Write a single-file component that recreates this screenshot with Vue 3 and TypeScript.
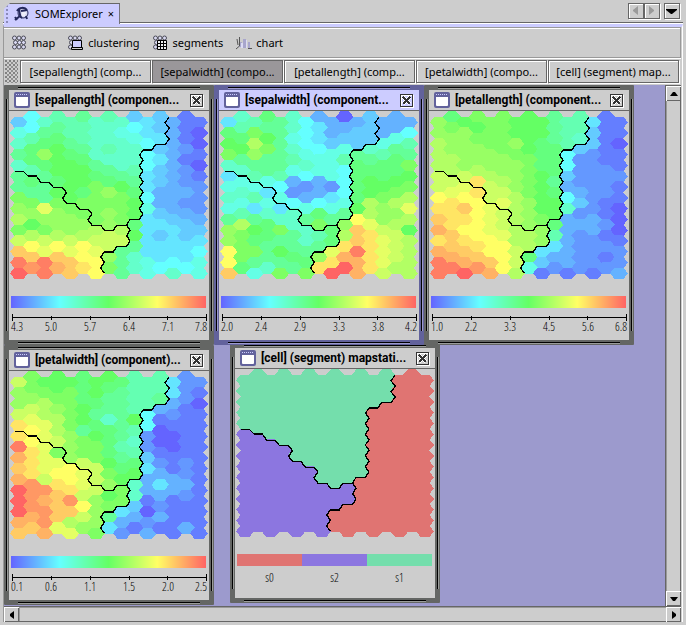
<script setup lang="ts">
interface MapWindow {
  id: string
  title: string
  active?: boolean
  rows?: string[]
  ticks?: string[]
}

interface Cell {
  points: string
  fill: string
}

// Each letter is one cell value on a 25 step scale, a = lowest, y = highest.
const windows: MapWindow[] = [
  {
    id: 'cell',
    title: '[cell] (segment) mapstati...',
  },
  {
    id: 'petal-width',
    title: '[petalwidth] (component)...',
    ticks: ['0.1', '0.6', '1.1', '1.5', '2.0', '2.5'],
    rows: [
      'qnmmmlmmljjjfcc',
      'onnmnlmlkjjjfcb',
      'oopnnllkkjjkdca',
      'qqponmkkkjgdcbb',
      'trrpnmlikmgbbbb',
      'tsrpokmlkjcaabb',
      'xsrqonnljicaabb',
      'vtrnonnlkjebbbb',
      'utrrsqqmllfcbcb',
      'vtqssrqnmmdddcb',
      'ywwttrqonidfddb',
      'ywvuwqomnibdbcb',
      'ywwuusonfeacbbb',
      'vvwupqokddcdbbb',
      'uuvrronfcbdbbdb',
    ],
  },
  {
    id: 'sepal-length',
    title: '[sepallength] (componen...',
    ticks: ['4.3', '5.0', '5.7', '6.4', '7.1', '7.8'],
    rows: [
      'egijjkijiefedbb',
      'hgkkjjiihgfedba',
      'ijllkjiiihgfdba',
      'klomlkijiigedcb',
      'illmmlkiiigfdba',
      'kjkmmmlkkjfedcb',
      'klklmmnlmkfedcc',
      'nkkmmlnonlgdddc',
      'onrnnnnnnmhddcc',
      'poooonnonmfeedd',
      'nmnooopoplfffee',
      'qpqpqpqqqmfefef',
      'usrsrsrqkkffffg',
      'xuxuussokihfgfh',
      'ywxvutsnkihgigh',
    ],
  },
  {
    id: 'sepal-width',
    title: '[sepalwidth] (component...',
    active: true,
    ticks: ['2.0', '2.4', '2.9', '3.3', '3.8', '4.2'],
    rows: [
      'fijlkigddadeddd',
      'ljnkkigfddeeddg',
      'mlpmkhgfeeeehhj',
      'nmonkihghhkijkk',
      'ikkkkjihhjlklln',
      'fijkjhghhgllllm',
      'hhhhgdcdcglmmmn',
      'iijfhcddfglmnnp',
      'hhfhfghghhmpopr',
      'kjkiiiklkkspoop',
      'opmlniinlourqpm',
      'onllkkijlputrqp',
      'snnkmkkkrtxtrqp',
      'snkkkllotvvtrqp',
      'ulhinkntyyvtqpp',
    ],
  },
  {
    id: 'petal-length',
    title: '[petallength] (component...',
    ticks: ['1.0', '2.2', '3.3', '4.5', '5.6', '6.8'],
    rows: [
      'olmnnnmmmkjjfbb',
      'onomnnmmmkjjebb',
      'poonnnomlkjieba',
      'poooonnmllgecbb',
      'ppooooonllgccbb',
      'qpqppoonmlecccc',
      'qqrtqponmkdcccb',
      'srstqqpnmlgdccb',
      'ttusrrpommiecba',
      'uttsrqponmdcdba',
      'vtssrqpooldddca',
      'tutssrppojdccbb',
      'vuutssqpffdcccc',
      'xvvuusqleddccbc',
      'xxywvsphbcbcbcd',
    ],
  },
]

const openWindows = [
  '[sepallength] (comp...',
  '[sepalwidth] (compo...',
  '[petallength] (comp...',
  '[petalwidth] (compo...',
  '[cell] (segment) map...',
]

const segments = [
  { name: 's0', color: '#e07472' },
  { name: 's2', color: '#8c76e0' },
  { name: 's1', color: '#74deac' },
]

// Each digit is the segment that the cell belongs to.
const segmentRows: string[] = [
  '111111111111000',
  '111111111111000',
  '111111111111000',
  '111111111100000',
  '111111111100000',
  '211111111100000',
  '222111111100000',
  '222211111100000',
  '222221111100000',
  '222222111100000',
  '222222212000000',
  '222222222000000',
  '222222220000000',
  '222222200000000',
  '222222200000000',
]

const stops = [
  [100, 100, 255],
  [100, 255, 255],
  [100, 255, 100],
  [255, 255, 100],
  [255, 100, 100],
]

function scaleColor(letter: string): string {
  const v = (letter.charCodeAt(0) - 97) / 6
  const i = Math.min(3, Math.floor(v))
  const t = v - i
  const mix = stops[i].map((a, k) => Math.round(a + (stops[i + 1][k] - a) * t))
  return `rgb(${mix.join(',')})`
}

function segmentColor(digit: string): string {
  return segments.find((s) => s.name === 's' + digit)!.color
}

function hexagon(col: number, row: number): string {
  const x = 57 + (col * 540) / 14
  const y = 112 + (row * 453) / 14 - (col % 2 ? 16 : 0)
  return [
    [x - 27, y],
    [x - 13, y - 17],
    [x + 13, y - 17],
    [x + 27, y],
    [x + 13, y + 17],
    [x - 13, y + 17],
  ]
    .map((p) => p.map(Math.round).join(','))
    .join(' ')
}

function cells(win: MapWindow): Cell[] {
  const rows = win.rows ?? segmentRows
  const paint = win.rows ? scaleColor : segmentColor
  return rows.flatMap((line, row) =>
    [...line].map((ch, col) => ({ points: hexagon(col, row), fill: paint(ch) })),
  )
}

const views = windows.map((win) => ({ ...win, cells: cells(win) }))

function anchor(i: number): 'start' | 'middle' | 'end' {
  return i === 0 ? 'start' : i === 5 ? 'end' : 'middle'
}

function labelX(i: number): number {
  return i === 0 ? 1 : i === 5 ? 197 : 2 + i * 39
}
</script>

<template>
  <main class="app">
    <header class="tabbar">
      <div class="doc-tab">
        <svg class="logo" width="16" height="16" viewBox="0 0 16 16" aria-hidden="true">
          <ellipse cx="9" cy="7" rx="5" ry="5" fill="#dcdcf4" stroke="#24285c" />
          <path d="M3 5C5 1 11 1 13 4M5 3C6 7 5 10 8 12" fill="none" stroke="#24285c" stroke-width="2" />
          <path d="M1 14l5-4M1 11l2 3M7 5l6-1M12 10l1 3" fill="none" stroke="#24285c" stroke-width="2" />
          <path d="M8 7h4M8 9h3" stroke="#fff" />
        </svg>
        <span>SOMExplorer</span>
        <button class="doc-close" type="button" aria-label="Close">×</button>
      </div>
      <div class="tab-nav">
        <div class="pair">
          <button type="button" class="square" aria-label="Previous" disabled>
            <svg width="16" height="16" viewBox="0 0 16 16"><path d="M10 3v9L5 8V7z" fill="#9a9a9a" /></svg>
          </button>
          <button type="button" class="square" aria-label="Next" disabled>
            <svg width="16" height="16" viewBox="0 0 16 16"><path d="M5 3v9l5-4V7z" fill="#9a9a9a" /></svg>
          </button>
        </div>
        <button type="button" class="square" aria-label="Tab list">
          <svg width="16" height="16" viewBox="0 0 16 16"><path d="M2 6h11v1L8 11H7L2 7z" /></svg>
        </button>
      </div>
    </header>

    <section class="pane">
      <nav class="toolbar">
        <button type="button" class="tool">
          <svg width="16" height="16" viewBox="0 0 16 16" aria-hidden="true">
            <use href="#hive" />
          </svg>
          map
        </button>
        <button type="button" class="tool">
          <svg width="16" height="16" viewBox="0 0 16 16" aria-hidden="true">
            <use href="#hive" />
            <path d="M4.500 5.500h9v8h-9z" fill="#ccccff" stroke="#000" />
            <path d="M3.500 12.500h11v2h-11z" fill="#cdcdcd" stroke="#000" />
          </svg>
          clustering
        </button>
        <button type="button" class="tool">
          <svg width="16" height="16" viewBox="0 0 16 16" aria-hidden="true">
            <use href="#hive" />
            <path d="M4.500 5.500h9v9h-9z" fill="#eee" stroke="#000" />
            <path d="M7.500 5v10M10.500 5v10M4 8.500h10M4 11.500h10" stroke="#000" />
          </svg>
          segments
        </button>
        <button type="button" class="tool">
          <svg width="16" height="16" viewBox="0 0 16 16" aria-hidden="true">
            <path d="M3 7h3v5H3zM7 4h3v9H7zM12 7h2v6h-2z" fill="#a8a6cc" />
            <path d="M5 8h2v5H5zM10 5h1v8h-1z" fill="#dcdcf4" />
            <path d="M3.500 2v9L0 14M1 4l1 6M12 13.500h4" fill="none" stroke="#555" />
          </svg>
          chart
        </button>
      </nav>

      <div class="strip">
        <span class="grip"></span>
        <button
          v-for="(name, i) in openWindows"
          :key="name"
          type="button"
          class="strip-button"
          :class="{ selected: i === 1 }"
        >
          {{ name }}
        </button>
      </div>

      <div class="scroller">
        <div class="desktop">
          <article
            v-for="win in views"
            :key="win.id"
            class="window"
            :class="[win.id, { active: win.active }]"
          >
            <header class="titlebar">
              <svg width="16" height="16" viewBox="0 0 16 16" aria-hidden="true">
                <rect width="16" height="16" rx="2" fill="#62629c" />
                <path d="M2 5h12v8a1 1 0 0 1-1 1H3a1 1 0 0 1-1-1z" fill="#fff" />
                <path d="M2 2.500h12" stroke="#ccccff" stroke-dasharray="1 1" />
              </svg>
              <h2>{{ win.title }}</h2>
              <button type="button" class="close" aria-label="Close window">
                <svg width="9" height="9" viewBox="0 0 9 9" shape-rendering="crispEdges">
                  <path d="M1 1l7 7M8 1L1 8" stroke="#fff" stroke-width="3" />
                  <path d="M1 1l7 7M8 1L1 8" stroke="#333" stroke-width="2" />
                </svg>
              </button>
            </header>
            <div class="content">
              <svg class="map" viewBox="30 78 594 504" shape-rendering="crispEdges" role="img" :aria-label="win.title">
                <polygon v-for="(cell, i) in win.cells" :key="i" :points="cell.points" :fill="cell.fill" />
                <use href="#borders" />
              </svg>
              <template v-if="win.ticks">
                <div class="ramp"></div>
                <svg class="axis" viewBox="0 0 198 24">
                  <path
                    d="M2 5.500H197M2.500 2v7M41.500 4v4M80.500 4v4M119.500 4v4M157.500 4v4M196.500 2v7"
                    fill="none"
                    stroke="#000"
                    shape-rendering="crispEdges"
                  />
                  <text v-for="(t, i) in win.ticks" :key="t" :x="labelX(i)" y="19" :text-anchor="anchor(i)">{{ t }}</text>
                </svg>
              </template>
              <ul v-else class="legend">
                <li v-for="s in segments" :key="s.name">
                  <span class="swatch" :style="{ background: s.color }"></span>{{ s.name }}
                </li>
              </ul>
            </div>
          </article>
        </div>

        <div class="scroll vertical">
          <button type="button" aria-label="Scroll up">
            <svg width="14" height="14" viewBox="0 0 14 14"><path d="M6 5h2l3 4H3z" /></svg>
          </button>
          <span class="track"></span>
          <button type="button" aria-label="Scroll down">
            <svg width="14" height="14" viewBox="0 0 14 14"><path d="M3 5h8L8 9H6z" /></svg>
          </button>
        </div>
        <div class="scroll horizontal">
          <button type="button" aria-label="Scroll left">
            <svg width="14" height="14" viewBox="0 0 14 14"><path d="M9 3v8L5 8V6z" /></svg>
          </button>
          <span class="track"></span>
          <button type="button" aria-label="Scroll right">
            <svg width="14" height="14" viewBox="0 0 14 14"><path d="M5 3v8l4-3V6z" /></svg>
          </button>
        </div>
      </div>
    </section>

    <svg class="defs" width="0" height="0" aria-hidden="true">
      <defs>
        <g id="hive" fill="#d8d8f0" stroke="#4c4c58">
          <ellipse cx="2.500" cy="3" rx="2" ry="2" />
          <ellipse cx="7" cy="3" rx="2" ry="2" />
          <ellipse cx="11.500" cy="3" rx="2" ry="2" />
          <ellipse cx="3.500" cy="7.500" rx="2" ry="2" />
          <ellipse cx="7.500" cy="7.500" rx="2" ry="2" />
          <ellipse cx="11.500" cy="7.500" rx="2" ry="2" />
          <ellipse cx="2.500" cy="12" rx="2" ry="2" />
          <ellipse cx="7" cy="12" rx="2" ry="2" />
          <ellipse cx="11.500" cy="12" rx="2" ry="2" />
        </g>
        <path
          id="borders"
          fill="none"
          stroke="#000"
          stroke-width="4"
          d="M45 259H70L84 273H109L122 292H147L160 307H187L199 323L188 340L199 355H225L238 373H264L276 387L264 404L276 421H302L314 436H340L350 421H380
             M507 97L495 113L508 130L495 146L508 163L495 178H467L456 195H429L419 210L429 226L418 242L429 258L418 274L429 290L418 306L429 322L418 338L429 355L418 371L429 387L418 403H390L380 420L390 436L380 452L390 468L380 484H350L340 501H313L302 516L313 532L302 549L313 565"
        />
      </defs>
    </svg>
  </main>
</template>

<style>
body {
  margin: 0;
  background: #cdcdcd;
}
</style>

<style scoped>
.app {
  display: flex;
  flex-direction: column;
  min-height: 100vh;
  box-sizing: border-box;
  padding: 3px 3px 3px 3px;
  background: #cdcdcd;
  color: #000;
  font: 11px/16px 'Noto Sans', 'Open Sans', sans-serif;
}

button {
  margin: 0;
  padding: 0;
  border: 0;
  background: #cdcdcd;
  color: inherit;
  font: inherit;
}

svg {
  display: block;
}

.defs {
  position: absolute;
}

.tabbar {
  display: flex;
  justify-content: space-between;
  height: 21px;
  padding-left: 1px;
  background: linear-gradient(#666 1px, #fff 1px) bottom / 100% 2px no-repeat;
}

.doc-tab {
  display: flex;
  align-items: center;
  gap: 4px;
  padding: 0 4px 0 10px;
  border-top: 1px solid #666;
  border-right: 1px solid #666;
  background:
    radial-gradient(circle at 1px 1px, #8a8ab8 1px, transparent 1px) 2px 5px / 4px 4px repeat-y,
    #ccccff;
  clip-path: polygon(0 6px, 6px 0, 100% 0, 100% 100%, 0 100%);
}

.logo {
  margin-right: 1px;
}

.doc-close {
  width: 8px;
  background: none;
}

.tab-nav {
  display: flex;
  gap: 4px;
  margin-right: 3px;
}

.pair {
  display: flex;
}

.square {
  width: 16px;
  height: 16px;
  border: 1px solid #666;
  box-shadow: inset 1px 1px #fff, 1px 1px #fff;
}

.square svg {
  margin: -1px;
}

.pane {
  flex: 1;
  display: flex;
  flex-direction: column;
  border-left: 1px solid #999;
  border-right: 1px solid #fff;
  padding-right: 1px;
  border-top: 3px solid #ccccff;
}

.toolbar {
  display: flex;
  align-items: center;
  gap: 13px;
  height: 28px;
  padding: 1px 8px 0;
  border: 1px solid #999;
  border-left: 0;
  box-shadow: inset 0 1px #fff, 0 1px #fff;
}

.tool {
  display: flex;
  align-items: center;
  gap: 4px;
}

.strip {
  display: grid;
  grid-template-columns: 14px repeat(5, minmax(0, 1fr));
  gap: 1px;
  padding: 2px 2px 2px 1px;
}

.grip {
  margin-right: 1px;
  background:
    radial-gradient(circle at 1px 1px, #808080 1px, transparent 1px) 0 0 / 4px 4px,
    radial-gradient(circle at 1px 1px, #909090 1px, transparent 1px) 2px 2px / 4px 4px;
}

.strip-button {
  height: 23px;
  padding: 0 6px;
  overflow: hidden;
  border: 1px solid #666;
  box-shadow: inset 1px 1px #fff, 1px 1px #fff;
  white-space: nowrap;
}

.strip-button.selected {
  background: #9a979a;
  box-shadow: 1px 1px #fff;
}

.scroller {
  flex: 1;
  display: grid;
  grid-template-columns: minmax(0, 1fr) 16px;
  grid-template-rows: minmax(520px, 1fr) 16px;
}

.desktop {
  position: relative;
  overflow: hidden;
  background: #9c9acd;
}

.window {
  --frame: #646664;
  --glow: #9a9c9a;
  position: absolute;
  width: 210px;
  box-sizing: border-box;
  padding: 5px;
  border-radius: 1px;
  background:
    linear-gradient(#000 1px, var(--glow) 1px) 14px 2px / calc(100% - 28px) 2px no-repeat,
    linear-gradient(#000 1px, var(--glow) 1px) 14px calc(100% - 1px) / calc(100% - 28px) 2px no-repeat,
    linear-gradient(90deg, #000 1px, var(--glow) 1px) 2px 14px / 2px calc(100% - 28px) no-repeat,
    linear-gradient(90deg, #000 1px, var(--glow) 1px) calc(100% - 1px) 14px / 2px calc(100% - 28px) no-repeat,
    var(--frame);
}

.window.active {
  --frame: #62629c;
  --glow: #9c9acd;
}

.sepal-length {
  left: 0;
  top: 0;
}

.sepal-width {
  left: 210px;
  top: 0;
}

.petal-length {
  left: 420px;
  top: 0;
}

.petal-width {
  left: 0;
  top: 260px;
}

.cell {
  left: 226px;
  top: 258px;
}

.titlebar {
  display: flex;
  align-items: center;
  gap: 5px;
  height: 20px;
  padding: 0 6px 0 5px;
  border-bottom: 1px solid #666;
  background: #cdcdcd;
}

.active .titlebar {
  background: #ccccff;
}

.titlebar h2 {
  flex: 1;
  margin: 0;
  overflow: hidden;
  font: bold 12px/16px Roboto, 'Noto Sans', sans-serif;
  white-space: nowrap;
}

.close {
  display: grid;
  place-items: center;
  width: 13px;
  height: 13px;
  border: 1px solid #333;
  background: inherit;
  box-shadow: inset 1px 1px #fff, 1px 1px #fff;
}

.content {
  height: 229px;
  box-sizing: border-box;
  padding: 0 1px;
  background: #cdcdcd;
}

.map {
  width: 198px;
  height: 168px;
}

.ramp {
  height: 12px;
  margin: 17px 2px 0 1px;
  background: linear-gradient(90deg, #6464ff, #64ffff, #64ff64, #ffff64, #ff6464);
}

.axis {
  width: 198px;
  height: 24px;
  margin-top: 4px;
  font: 300 12px 'Open Sans Condensed Light', 'Liberation Sans Narrow', 'Open Sans Condensed', sans-serif;
}

.legend {
  display: grid;
  grid-template-columns: repeat(3, 1fr);
  margin: 17px 2px 0 1px;
  padding: 0;
  list-style: none;
  text-align: center;
  font: 300 12px/16px 'Open Sans Condensed Light', 'Liberation Sans Narrow', 'Open Sans Condensed', sans-serif;
}

.swatch {
  display: block;
  height: 12px;
  margin-bottom: 4px;
}

.scroll {
  display: flex;
  border: 0 solid #666;
}

.scroll button {
  display: grid;
  place-items: center;
  width: 15px;
  height: 15px;
  box-shadow: inset 1px 1px #fff, inset -1px -1px #666;
}

.track {
  flex: 1;
}

.vertical {
  flex-direction: column;
  border-width: 1px 0 0 1px;
}

.vertical .track {
  border-right: 1px solid #666;
  box-shadow: inset 1px 0 #999;
}

.horizontal {
  grid-column: 1 / -1;
  border-width: 1px 0 0;
}

.horizontal .track {
  border-bottom: 1px solid #666;
  box-shadow: inset 1px 1px #999;
}
</style>
